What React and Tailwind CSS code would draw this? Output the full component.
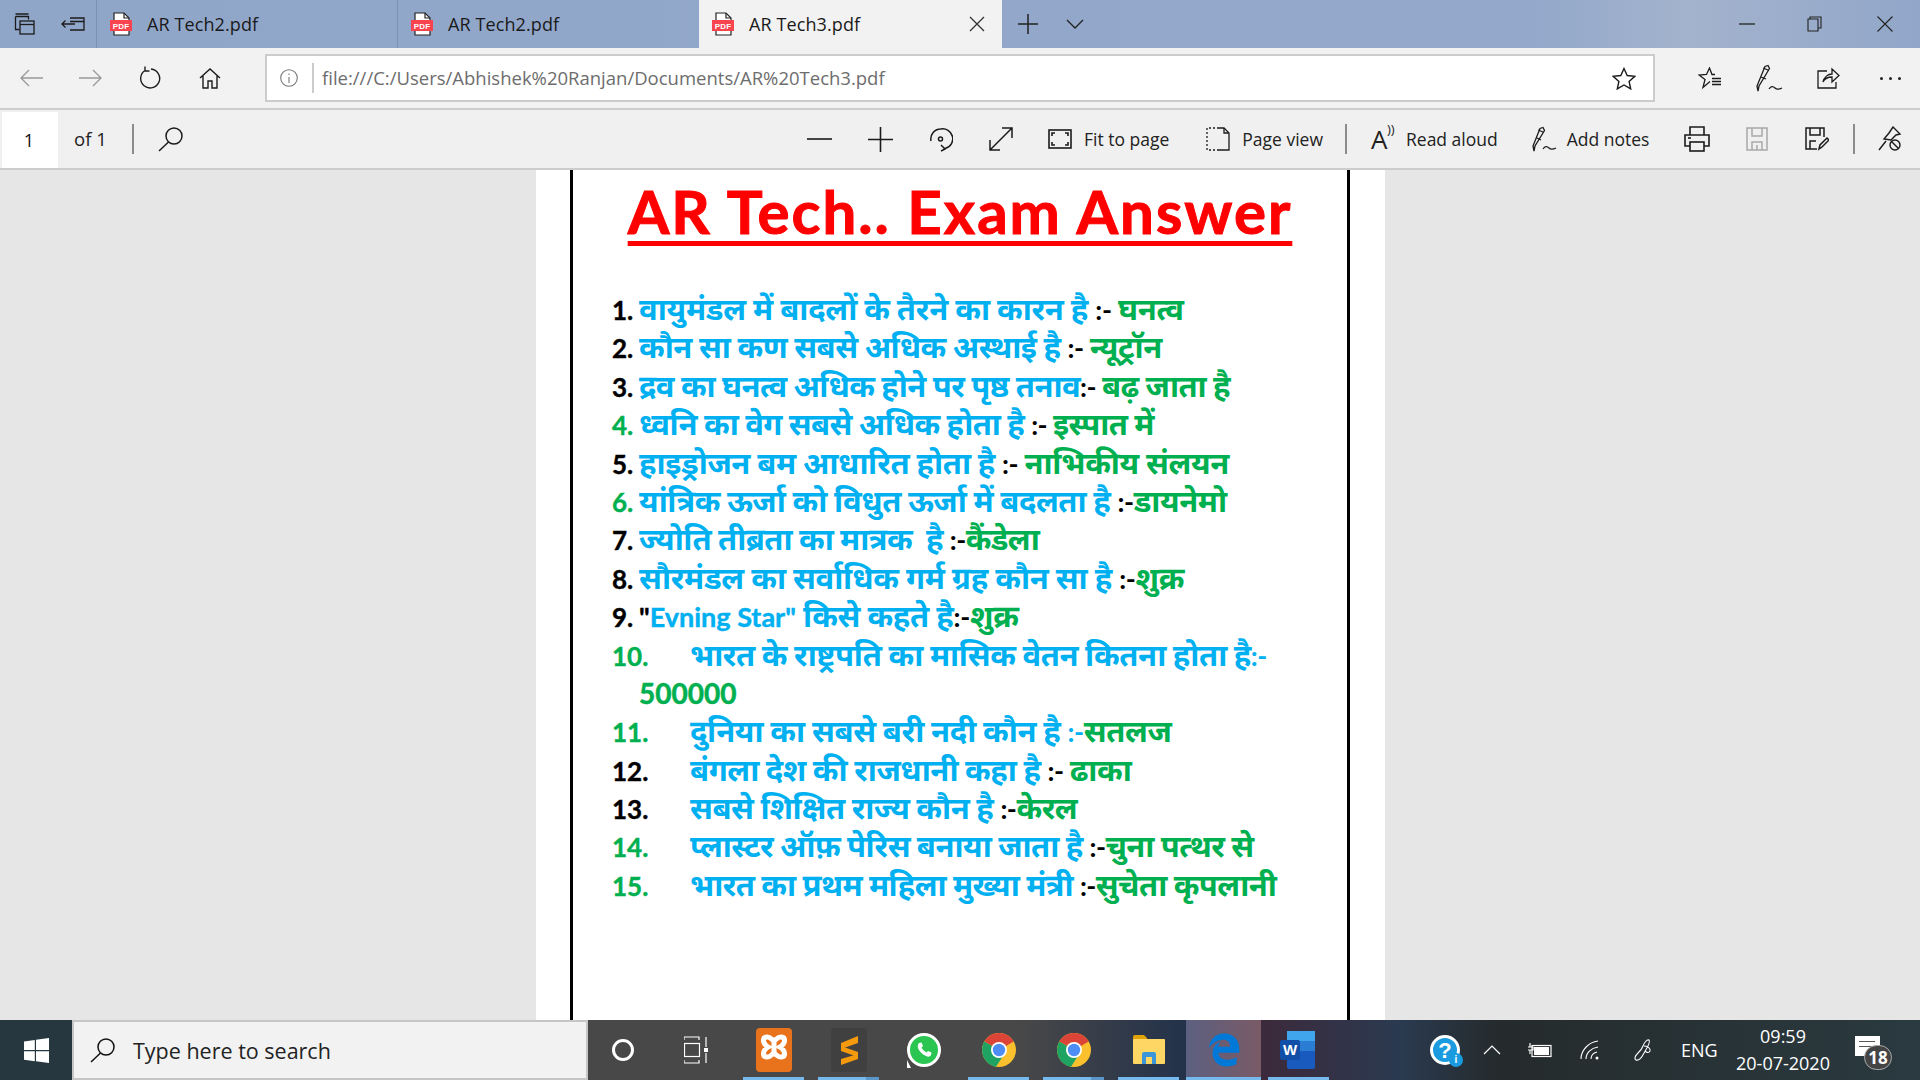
import React from 'react';
import { FaEdgeLegacy } from 'react-icons/fa';

const rows = [
  { n: '1.', nc: 'text-black', t: 'tracking-[-0.3px]', q: 'वायुमंडल में बादलों के तैरने का कारन है ', s: ':- ', a: 'घनत्व' },
  { n: '2.', nc: 'text-black', t: 'tracking-[-0.5px]', q: 'कौन सा कण सबसे अधिक अस्थाई है ', s: ':- ', a: 'न्यूट्रॉन' },
  { n: '3.', nc: 'text-black', t: 'tracking-[-0.6px]', q: 'द्रव का घनत्व अधिक होने पर पृष्ठ तनाव', s: ':- ', a: 'बढ़ जाता है' },
  { n: '4.', nc: 'text-[#00b050]', t: 'tracking-[-0.6px]', q: 'ध्वनि का वेग सबसे अधिक होता है ', s: ':- ', a: 'इस्पात में' },
  { n: '5.', nc: 'text-black', t: 'tracking-[-0.4px]', q: 'हाइड्रोजन बम आधारित होता है ', s: ':- ', a: 'नाभिकीय संलयन' },
  { n: '6.', nc: 'text-[#00b050]', t: 'tracking-[-0.45px]', q: 'यांत्रिक ऊर्जा को विधुत ऊर्जा में बदलता है ', s: ':-', a: 'डायनेमो' },
  { n: '7.', nc: 'text-black', t: 'tracking-[-0.6px]', q: 'ज्योति तीब्रता का मात्रक  है ', s: ':-', a: 'कैंडेला' },
  { n: '8.', nc: 'text-black', t: 'tracking-[-0.3px]', q: 'सौरमंडल का सर्वाधिक गर्म ग्रह कौन सा है ', s: ':-', a: 'शुक्र' },
  { n: '9.', nc: 'text-black', t: 'tracking-[-0.3px]', en: 'Evning Star"', q: ' किसे कहते है', s: ':-', a: 'शुक्र' },
  { n: '10.', nc: 'text-[#00b050]', t: 'tracking-[-0.5px]', wide: true, q: 'भारत के राष्ट्रपति का मासिक वेतन कितना होता है', qs: ':-', s: '', a: '' },
  { n: '', nc: '', t: '', q: '', s: '', a: '500000', digits: true },
  { n: '11.', nc: 'text-[#00b050]', t: 'tracking-[-0.4px]', wide: true, q: 'दुनिया का सबसे बरी नदी कौन है ', qs: ':-', s: '', a: 'सतलज' },
  { n: '12.', nc: 'text-black', t: 'tracking-[-0.5px]', wide: true, q: 'बंगला देश की राजधानी कहा है ', s: ':- ', a: 'ढाका' },
  { n: '13.', nc: 'text-black', t: 'tracking-[-0.5px]', wide: true, q: 'सबसे शिक्षित राज्य कौन है ', s: ':-', a: 'केरल' },
  { n: '14.', nc: 'text-[#00b050]', t: 'tracking-[-0.6px]', wide: true, q: 'प्लास्टर ऑफ़ पेरिस बनाया जाता है ', s: ':-', a: 'चुना पत्थर से' },
  { n: '15.', nc: 'text-[#00b050]', t: 'tracking-[-0.6px]', wide: true, q: 'भारत का प्रथम महिला मुख्या मंत्री ', s: ':-', a: 'सुचेता कृपलानी' },
];

const Ic = ({ w = 24, h = 24, className = 'text-[#1b1b1b]', sw = 1.3, children }) => (
  <svg width={w} height={h} viewBox={`0 0 ${w} ${h}`} fill="none" stroke="currentColor" strokeWidth={sw} className={`shrink-0 ${className}`}>
    {children}
  </svg>
);

const PdfIcon = () => (
  <svg width="22" height="24" viewBox="0 0 22 24" className="shrink-0">
    <path d="M4 1h10l5 5v17H4z" fill="#fff" stroke="#222" strokeWidth="1.2" />
    <path d="M14 1v5h5" fill="none" stroke="#222" strokeWidth="1.2" />
    <rect x="0" y="8" width="22" height="11" fill="#f8444f" />
    <text x="11" y="16.5" textAnchor="middle" fontSize="8" fontWeight="700" fill="#fff" fontFamily="Liberation Sans">PDF</text>
  </svg>
);

const Tab = ({ title, active, className }) => (
  <div className={`h-12 flex items-center pl-[13px] gap-[15px] text-[18px] tracking-[0.1px] text-[#1a1a1a] ${className}`}>
    <PdfIcon />
    <span className="flex-1">{title}</span>
    {active && (
      <Ic w={16} h={16} className="text-[#333] mr-[17px]"><path d="M1 1l14 14M15 1L1 15" /></Ic>
    )}
  </div>
);

const ToolText = ({ children, className = '' }) => (
  <span className={`text-[17.5px] text-[#222] whitespace-nowrap shrink-0 ${className}`}>{children}</span>
);

const Chrome = () => (
  <svg width="34" height="34" viewBox="0 0 34 34">
    <circle cx="17" cy="17" r="17" fill="#fbc02d" />
    <path d="M17 17L2.3 8.5A17 17 0 0 1 31.7 8.500z" fill="#db4437" />
    <path d="M17 17L2.3 8.5A17 17 0 0 0 14 33.7L21 23z" fill="#1ea362" />
    <circle cx="17" cy="17" r="8" fill="#fff" />
    <circle cx="17" cy="17" r="6.2" fill="#4d8df5" />
  </svg>
);

const TaskIcon = ({ children, active, split, full, className = '' }) => (
  <div className={`relative w-[75px] h-full flex items-center justify-center ${className}`}>
    {children}
    {active && (
      <div className={`absolute bottom-0 h-[3px] flex ${full ? 'left-0 right-0' : 'left-[7px] right-[7px]'}`}>
        <div className="flex-1 bg-[#76b9ed]" />
        {split && <div className="w-[13px] bg-[#5a96c8]" />}
      </div>
    )}
  </div>
);

const Row = ({ r }) => (
  <div className="flex items-baseline h-[38.4px] whitespace-pre">
    <div className={`${r.wide ? 'w-[78px]' : 'w-[27px]'} shrink-0 text-[26px] [-webkit-text-stroke:0.4px] ${r.nc}`}>{r.n}</div>
    <div className={`text-[31px] ${r.t}`}>
      {r.en && <span className="text-[27px] tracking-normal [-webkit-text-stroke:0.4px]"><span className="text-black">"</span><span className="text-[#00b0f0]">{r.en}</span></span>}
      <span className="text-[#00b0f0]">{r.q}</span>
      {r.qs && <span className="text-[#00b0f0] text-[27px]">{r.qs}</span>}
      {r.s && <span className="text-black text-[27px]">{r.s}</span>}
      <span className={`text-[#00b050] ${r.digits ? 'text-[28px] tracking-normal [-webkit-text-stroke:0.5px]' : ''}`}>{r.a}</span>
    </div>
  </div>
);

export default function App() {
  return (
    <div className="w-[1920px] h-[1080px] overflow-hidden flex flex-col bg-[#e6e6e6]" style={{ fontFamily: '"Open Sans", sans-serif' }}>
      {/* tab strip */}
      <div className="h-12 shrink-0 flex bg-[linear-gradient(90deg,#90a6c9_0%,#93a8ca_80%,#a3b3cd_88%,#91a6c9_100%)]">
        <div className="w-[97px] flex items-center pl-[14px] gap-[25px] border-r border-[#7c91b3]">
          <Ic w={22} h={22}>
            <path d="M1.5 3.5h13v3M1.5 3.5v13h4M1.5 1h13" />
            <rect x="6" y="8" width="14" height="13" />
            <path d="M6 11.5h14" />
          </Ic>
          <Ic w={24} h={16}>
            <path d="M9 2h14v12H9M9 5.5h14M1 8h13M4.5 4.5L1 8l3.5 3.5" />
          </Ic>
        </div>
        <Tab title="AR Tech2.pdf" className="w-[301px] border-r border-[#7c91b3]" />
        <Tab title="AR Tech2.pdf" className="w-[301px]" />
        <Tab title="AR Tech3.pdf" active className="w-[303px] bg-[#f2f2f2]" />
        <div className="flex items-center pl-[16px] gap-[28px]">
          <Ic w={20} h={20} sw={1.5} className="text-[#222]"><path d="M10 0v20M0 10h20" /></Ic>
          <Ic w={18} h={10} sw={1.3} className="text-[#222]"><path d="M1 1l8 8 8-8" /></Ic>
        </div>
        <div className="ml-auto flex items-center pr-[27px]">
          <Ic w={16} h={2} className="text-[#222]"><path d="M0 1h16" /></Ic>
          <div className="ml-[52px]"><Ic w={15} h={16} sw={1.1} className="text-[#222]"><path d="M3 3V1h11v11h-3M1 3h10v12H1z" /></Ic></div>
          <div className="ml-[55px]"><Ic w={16} h={16} sw={1.1} className="text-[#222]"><path d="M0.5 0.5l15 15M15.5 0.5l-15 15" /></Ic></div>
        </div>
      </div>

      {/* address bar */}
      <div className="h-[62px] shrink-0 flex items-center bg-[#f2f2f2] border-b-2 border-[#cccccc]">
        <div className="flex items-center pl-[20px] w-[265px]">
          <Ic w={23} h={18} className="text-[#999]"><path d="M23 9H1M9 1L1 9l8 8" /></Ic>
          <div className="ml-[36px]"><Ic w={23} h={18} className="text-[#999]"><path d="M0 9h22M14 1l8 8-8 8" /></Ic></div>
          <div className="ml-[38px]"><Ic w={22} h={24} sw={1.4}><path d="M5 4.5A9.5 9.5 0 1 0 11 3M5 0.5v4.5h4.5" /></Ic></div>
          <div className="ml-[37px]"><Ic w={22} h={22} sw={1.4}><path d="M1 11L11 2l10 9M4 9v12h5v-7h4v7h5V9" /></Ic></div>
        </div>
        <div className="w-[1390px] h-12 bg-white border-2 border-[#cccccc] flex items-center pl-[13px]">
          <Ic w={18} h={18} sw={1.1} className="text-[#777]">
            <circle cx="9" cy="9" r="8.3" />
            <path d="M9 8v6M9 4.5v1.6" />
          </Ic>
          <div className="w-[2px] h-[30px] bg-[#cccccc] ml-[14px] mr-[8px]" />
          <span className="text-[18.5px] text-[#6d6d6d] whitespace-nowrap">file:///C:/Users/Abhishek%20Ranjan/Documents/AR%20Tech3.pdf</span>
          <div className="ml-auto mr-[17px]">
            <Ic w={24} h={23} sw={1.4}><path d="M12 1.5l3.2 7 7.6.8-5.700 5.100 1.600 7.500L12 18l-6.700 3.900 1.600-7.500L1.200 9.300l7.600-.8z" /></Ic>
          </div>
        </div>
        <div className="flex items-center pl-[43px]">
          <Ic w={24} h={23} sw={1.3}><path d="M12 14.500l-7 6 2-8-6-4.500 7.500-.5L11.500 1l2.500 6.500h3M14 11.500h9M14 14.500h9M14 17.500h9" /></Ic>
          <div className="ml-[33px]"><Ic w={28} h={28} sw={1.3}><path d="M4 22L3 27l-1-5L10 2.500l3-1 1.500 3zM6 13l5 2M8 4l5 2M14 25c2-3 4-3 6-1s5 1 7 0" /></Ic></div>
          <div className="ml-[33px]"><Ic w={24} h={24} sw={1.3}><path d="M11 5H2v17h18v-6M7 16c1-5 5-8 9-8V3l7 6.500-7 6.500v-5c-3 0-7 1-9 5z" /></Ic></div>
          <div className="flex gap-[6px] ml-[40px]">
            <div className="w-[3px] h-[3px] rounded-full bg-[#222]" />
            <div className="w-[3px] h-[3px] rounded-full bg-[#222]" />
            <div className="w-[3px] h-[3px] rounded-full bg-[#222]" />
          </div>
        </div>
      </div>

      {/* pdf toolbar */}
      <div className="h-[60px] shrink-0 flex items-center bg-[#f0f0f0] border-b-2 border-[#cccccc]">
        <div className="w-[56px] h-[56px] shrink-0 ml-[2px] self-start mt-[2px] pr-[2px] bg-white flex items-center justify-center text-[18px] text-[#111]">1</div>
        <ToolText className="ml-[16px] w-[33px] text-[18.5px] text-[#6f6f6f]">of 1</ToolText>
        <div className="w-[2px] h-[30px] bg-[#8c8c8c] ml-[25px] shrink-0" />
        <div className="ml-[24px]">
          <Ic w={26} h={26} sw={1.5}><circle cx="16" cy="10" r="8" /><path d="M10.500 16L1 25" /></Ic>
        </div>

        <div className="ml-[623px] flex items-center shrink-0">
          <Ic w={25} h={2} sw={1.6}><path d="M0 1h25" /></Ic>
          <div className="ml-[36px]"><Ic w={25} h={25} sw={1.6}><path d="M12.500 0v25M0 12.500h25" /></Ic></div>
          <div className="ml-[35px]">
            <Ic w={25} h={25} sw={1.5}><path d="M3 14A10 10 0 0 1 12.500 2 10 10 0 0 1 17 21.500M13 18l4 4-4 2" /><circle cx="12.500" cy="12" r="2" /></Ic>
          </div>
          <div className="ml-[36px]">
            <Ic w={24} h={24} sw={1.5}><path d="M1 23L23 1M13 1h10v10M1 13v10h10" /></Ic>
          </div>
          <div className="ml-[35px]">
            <Ic w={24} h={20} sw={1.6}><rect x="1" y="1" width="22" height="18" /><path d="M4 7V4h3M20 7V4h-3M4 13v3h3M20 13v3h-3" /></Ic>
          </div>
          <ToolText className="ml-[12px]">Fit to page</ToolText>
          <div className="ml-[37px]">
            <Ic w={24} h={24} sw={1.3}>
              <path d="M13 1h5l5 5v17H11" />
              <path d="M18 1v5h5" />
              <path d="M13 1H1v22h10" strokeDasharray="2 2" />
            </Ic>
          </div>
          <ToolText className="ml-[12px]">Page view</ToolText>
          <div className="w-[2px] h-[30px] bg-[#8c8c8c] ml-[22px]" />
          <div className="ml-[24px] flex items-start h-[26px] w-[24px] relative text-[26px] leading-[26px] text-[#222]">
            A
            <span className="absolute left-[16px] -top-[3px] text-[13px] leading-[13px]">))</span>
          </div>
          <ToolText className="ml-[11px]">Read aloud</ToolText>
          <div className="ml-[33px]">
            <Ic w={26} h={26} sw={1.3}><path d="M4 20L3 25l-1-5L9 2.500l3-1 1.500 3zM6 12l4 2M7 4l5 2M12 23c2-3 4-3 6-1s5 1 7 0" /></Ic>
          </div>
          <ToolText className="ml-[10px]">Add notes</ToolText>
          <div className="ml-[35px]">
            <Ic w={26} h={26} sw={1.6}><path d="M6 9V1h14v8M6 20H1V9h24v11h-5" /><rect x="6" y="16" width="14" height="9" /><path d="M4 12h3" /></Ic>
          </div>
          <div className="ml-[36px]">
            <Ic w={22} h={24} sw={1.5} className="text-[#a8a8a8]"><path d="M1 1h20v22H1zM6 1v8h10V1M6 23v-8h10v8M11 18v5" /></Ic>
          </div>
          <div className="ml-[37px]">
            <Ic w={24} h={24} sw={1.5}><path d="M12 22H1V1h18v9M5 1v7h10V1M5 22v-8h6M14 22l1-4 7-7 2 2-7 7z" /></Ic>
          </div>
          <div className="w-[2px] h-[30px] bg-[#8c8c8c] ml-[24px]" />
          <div className="ml-[23px]">
            <Ic w={24} h={26} sw={1.4}>
              <path d="M15 1l7 7-4 1-5 5-7-1 5-6zM8 15L1 24" />
              <circle cx="17" cy="19" r="5" />
              <path d="M13.500 15.500l7 7" />
            </Ic>
          </div>
        </div>
      </div>

      {/* document */}
      <div className="flex-1 min-h-0 flex justify-center">
        <div className="w-[849px] h-full bg-white flex justify-center">
          <div className="w-[780px] h-full border-x-[3px] border-black" style={{ fontFamily: '"Lato", "Noto Sans Devanagari", "Noto Sans", sans-serif' }}>
            <h1 className="pt-[6px] text-center text-[60px] leading-[70px] font-bold [-webkit-text-stroke:1px_#ff0000] text-[#ff0000] underline decoration-[5px] underline-offset-[7px] [text-decoration-skip-ink:none] tracking-[2px]">
              AR Tech.. Exam Answer
            </h1>
            <div className="pl-[39px] pt-[43px] leading-[38px] font-bold">
              {rows.map((r, i) => <Row key={i} r={r} />)}
            </div>
          </div>
        </div>
      </div>

      {/* taskbar */}
      <div className="h-[60px] shrink-0 flex text-white bg-[linear-gradient(90deg,#26373f_0px,#26373f_60px,#484848_600px,#484848_1020px,#24324a_1180px,#24324a_1185px,#3c2a3c_1265px,#2a3a50_1400px,#252b2c_1500px,#2a3a40_1920px)]">
        <div className="w-[72px] flex items-center justify-center">
          <svg width="25" height="25" viewBox="0 0 25 25" fill="#fff">
            <path d="M0 3.500L10.800 2v10H0zM12 1.800L25 0v12H12zM0 13.200h10.800v10L0 21.800zM12 13.200h13V25l-13-1.800z" />
          </svg>
        </div>
        <div className="w-[516px] bg-[#f2f2f2] border-2 border-[#c6c6c6] flex items-center pl-[16px] gap-[17px] text-[21.5px] text-[#222]">
          <Ic w={26} h={26} sw={1.5} className="text-[#111]"><circle cx="16" cy="10" r="8" /><path d="M10.500 16L1 25" /></Ic>
          <span className="pt-[2px]">Type here to search</span>
        </div>
        <div className="w-[68px] flex items-center justify-center">
          <div className="w-[22px] h-[22px] rounded-full border-[3px] border-white ml-[1px]" />
        </div>
        <div className="w-[80px] flex items-center justify-center">
          <Ic w={24} h={28} sw={1.2} className="text-white">
            <path d="M0 4V1h15v3M0 24v3h15v-3" />
            <rect x="0.500" y="7.500" width="15" height="13" />
            <path d="M22 1v10M22 17v10" />
            <rect x="20" y="12" width="4" height="4" fill="currentColor" stroke="none" />
          </Ic>
        </div>
        <TaskIcon active>
          <div className="w-[36px] h-[44px] rounded-[4px] bg-[#e8731c] flex items-center justify-center">
            <svg width="28" height="34" viewBox="0 0 28 34" fill="none" stroke="#fff" strokeWidth="5">
              <path d="M4 5c5-3 7 1 10 3 3-2 5-6 10-3 2 4-2 8-4 9 2 1 6 5 4 9-5 3-7-1-10-3-3 2-5 6-10 3-2-4 2-8 4-9-2-1-6-5-4-9z" />
              <path d="M14 8v12" />
            </svg>
          </div>
        </TaskIcon>
        <TaskIcon active split>
          <div className="w-[36px] h-[44px] rounded-[3px] bg-[#404040] flex items-center justify-center">
            <svg width="20" height="30" viewBox="0 0 20 30" fill="#f59a0c">
              <path d="M19 1v7L2 14V8zM2 11l17 6v5L2 16zM19 19v5L2 30v-6z" />
            </svg>
          </div>
        </TaskIcon>
        <TaskIcon>
          <div className="relative w-[34px] h-[34px] rounded-full bg-[#2bc652] border-[3px] border-white flex items-center justify-center">
            <svg width="18" height="18" viewBox="0 0 18 18" fill="#fff"><path d="M4 2l2.500-.5L8 5 6.500 6.500c1 2 3 4 5 5L13 10l3.500 1.500L16 14c-1 2-3 2-5 1-4-1.500-7-5-8-8-.5-2 0-4 1-5z" /></svg>
            <div className="absolute -bottom-[4px] -left-[3px] w-0 h-0 border-l-[4px] border-l-white border-t-[8px] border-t-transparent" />
          </div>
        </TaskIcon>
        <TaskIcon active><Chrome /></TaskIcon>
        <TaskIcon active split><Chrome /></TaskIcon>
        <TaskIcon active>
          <svg width="34" height="32" viewBox="0 0 34 32">
            <path d="M1 3a2 2 0 0 1 2-2h9l3 3v8H1z" fill="#e0a306" />
            <rect x="1" y="5" width="32" height="25" rx="1" fill="#fdd663" />
            <path d="M10 30V20a2 2 0 0 1 2-2h10a2 2 0 0 1 2 2v10h-4v-7h-6v7z" fill="#3a96d9" />
          </svg>
        </TaskIcon>
        <TaskIcon active full className="bg-[linear-gradient(90deg,#5c6080,#7a5a66)]">
          <FaEdgeLegacy className="text-[#0078d7]" size={34} />
        </TaskIcon>
        <TaskIcon active>
          <svg width="38" height="40" viewBox="0 0 38 40">
            <rect x="7" y="1" width="28" height="38" rx="2" fill="#185abd" />
            <rect x="7" y="1" width="28" height="10" fill="#41a5ee" />
            <rect x="7" y="11" width="28" height="10" fill="#2b7cd3" />
            <rect x="0" y="10" width="20" height="20" rx="2" fill="#114ea8" />
            <text x="10" y="25" textAnchor="middle" fontSize="15" fontWeight="700" fill="#fff" fontFamily="Liberation Sans">W</text>
          </svg>
        </TaskIcon>
        <div className="ml-[94px] flex items-center">
          <div className="relative w-[30px] h-[30px] rounded-full bg-[#1a9be0] border-[3px] border-white flex items-center justify-center text-[22px] font-bold text-white" style={{ fontFamily: '"Liberation Sans"' }}>
            ?
            <div className="absolute -right-[6px] -bottom-[5px] w-[14px] h-[14px] rounded-full bg-[#1a9be0] text-[10px] leading-[14px] text-center">i</div>
          </div>
          <div className="ml-[23px]">
            <Ic w={18} h={10} sw={1.2} className="text-white"><path d="M1 9l8-8 8 8" /></Ic>
          </div>
          <div className="ml-[27px]">
            <svg width="24" height="16" viewBox="0 0 24 16" fill="none" stroke="#fff" strokeWidth="1.200">
              <rect x="4" y="3.500" width="19" height="11" />
              <rect x="6" y="5" width="15" height="8" fill="#fff" stroke="none" />
              <path d="M0 5h5v3H0M2 1v4M2 8v4" />
            </svg>
          </div>
          <div className="ml-[28px]">
            <Ic w={20} h={20} sw={1.1} className="text-white">
              <path d="M1 19C1 10 9 2 18 1M6 19c0-6 5-11 12-12M11 19c0-3 2-6 6-7" />
              <circle cx="17" cy="18" r="1.500" fill="currentColor" stroke="none" />
            </Ic>
          </div>
          <div className="ml-[33px]">
            <Ic w={20} h={24} sw={1.1} className="text-white"><path d="M2 20c0-4 6-6 8-12 1-3 4-7 6-6 2 2-2 8-5 13-2 4-5 8-8 7-1 0-1-1-1-2zM11 8c3 0 7 2 6 5-1 2-3 2-5 0" /></Ic>
          </div>
          <span className="ml-[28px] text-[18px] text-white w-[35px]">ENG</span>
          <div className="ml-[19px] w-[96px] flex flex-col items-center text-[18px] leading-[27px] text-white">
            <span>09:59</span>
            <span className="whitespace-nowrap">20-07-2020</span>
          </div>
          <div className="relative ml-[24px] w-[26px] h-[30px]">
            <div className="absolute left-0 top-[1px] w-[25px] h-[20px] bg-white" />
            <div className="absolute left-[4px] top-[6px] w-[16px] h-[1px] bg-[#555]" />
            <div className="absolute left-[4px] top-[11px] w-[16px] h-[1px] bg-[#555]" />
            <div className="absolute left-[9px] top-[10px] w-[28px] h-[25px] rounded-full bg-[#444] border border-[#aaa] text-[17px] leading-[23px] font-bold text-center">18</div>
          </div>
        </div>
      </div>
    </div>
  );
}
